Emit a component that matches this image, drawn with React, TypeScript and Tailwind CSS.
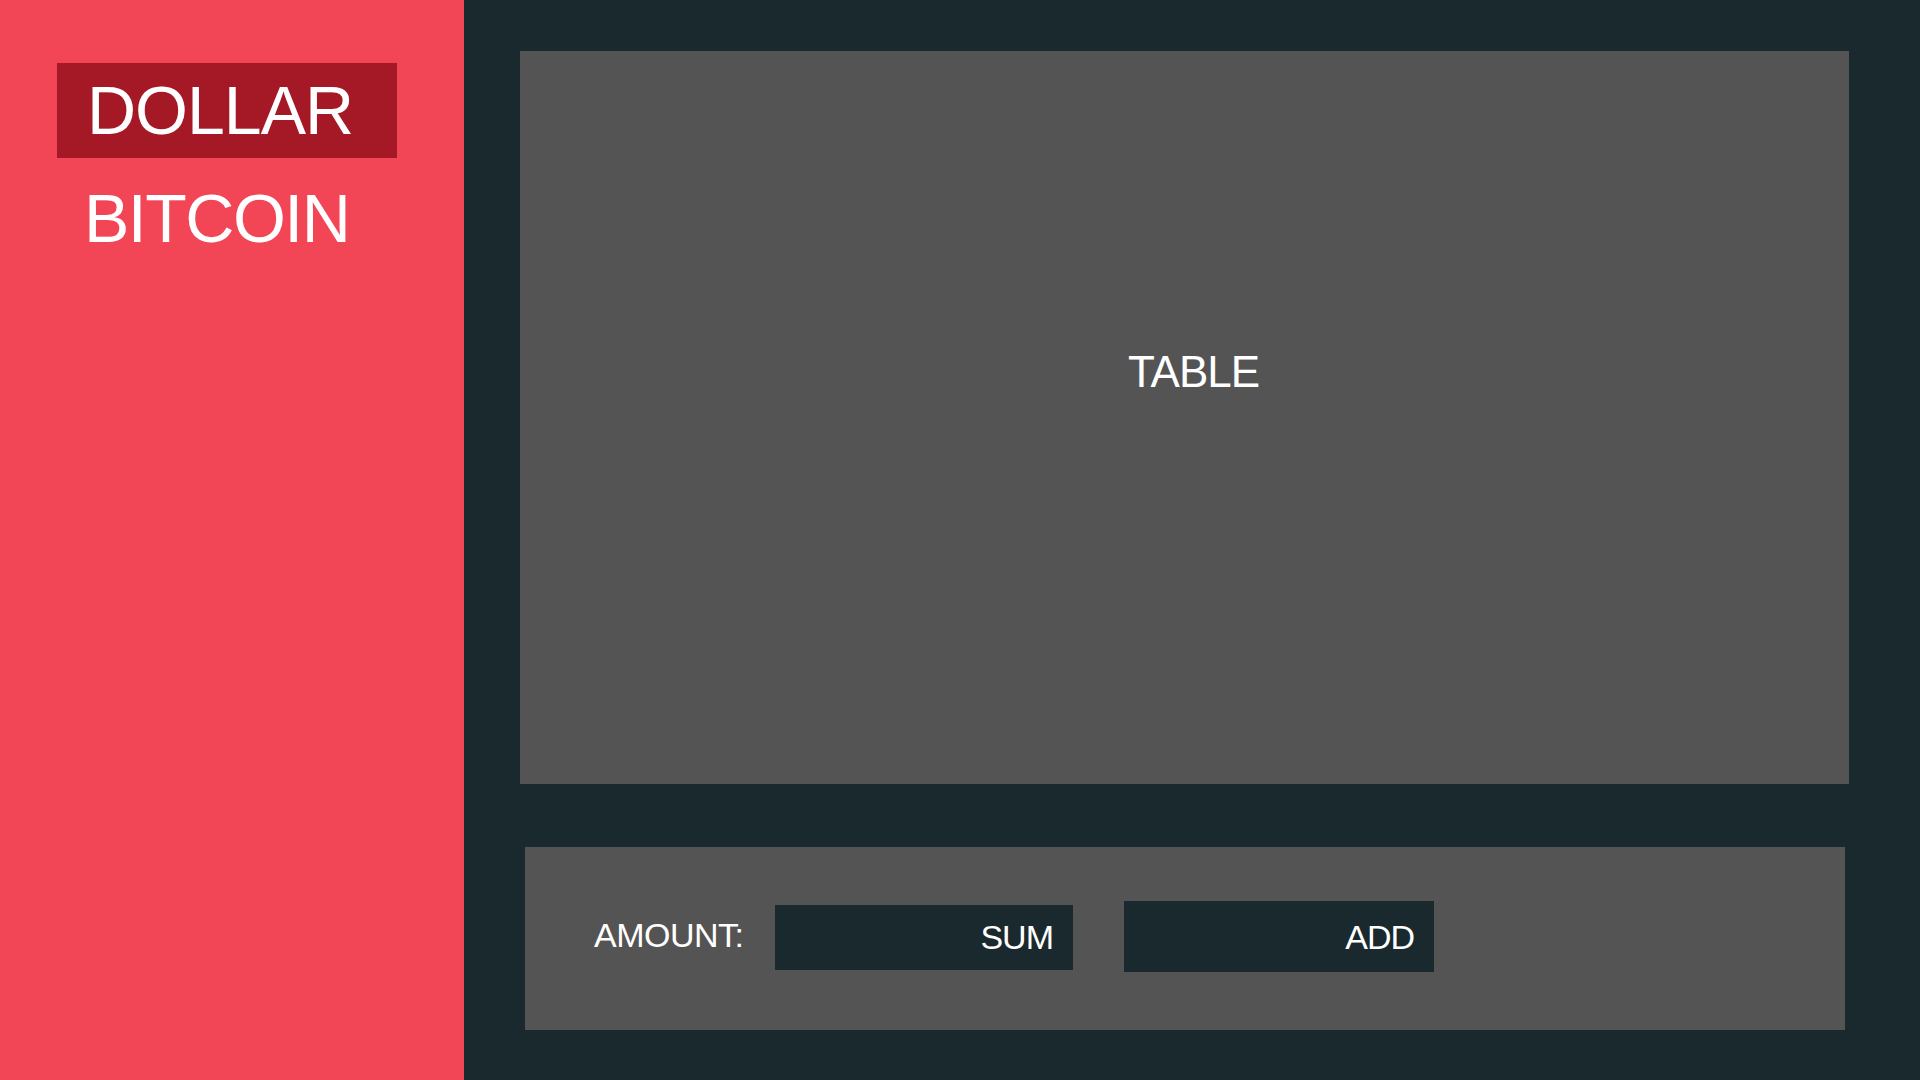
import React from 'react';

export default function App() {
  return (
    <div
      className="flex w-[1920px] h-[1080px] overflow-hidden text-white"
      style={{ fontFamily: '"Liberation Sans", Arial, sans-serif' }}
    >
      <aside className="w-[464px] shrink-0 bg-[#f24555]">
        <div className="ml-[57px] mt-[63px] w-[340px] h-[95px] bg-[#a51926] flex items-center pl-[30px] pb-[2px]">
          <span className="text-[68px] leading-none tracking-[-1px]">DOLLAR</span>
        </div>
        <div className="mt-[26px] pl-[84px] text-[68px] leading-none tracking-[-1.5px]">BITCOIN</div>
      </aside>

      <main className="flex-1 bg-[#1a292e]">
        <section className="ml-[56px] mt-[51px] w-[1329px] h-[733px] bg-[#545454] pt-[299px] pl-[18px] text-center">
          <span className="text-[44px] leading-none tracking-[-1px]">TABLE</span>
        </section>

        <section className="ml-[61px] mt-[63px] w-[1320px] h-[183px] bg-[#545454] flex items-start">
          <label className="ml-[69px] mt-[71px] w-[181px] text-[34px] leading-none tracking-[-0.5px]">AMOUNT:</label>
          <input
            type="text"
            placeholder="SUM"
            className="mt-[58px] w-[298px] h-[65px] bg-[#1a292e] text-right pr-[20px] text-[34px] leading-none tracking-[-1px] text-white placeholder:text-white outline-none"
          />
          <button className="ml-[51px] mt-[54px] w-[310px] h-[71px] bg-[#1a292e] text-right pr-[20px] text-[34px] leading-none tracking-[-1px]">
            ADD
          </button>
        </section>
      </main>
    </div>
  );
}
